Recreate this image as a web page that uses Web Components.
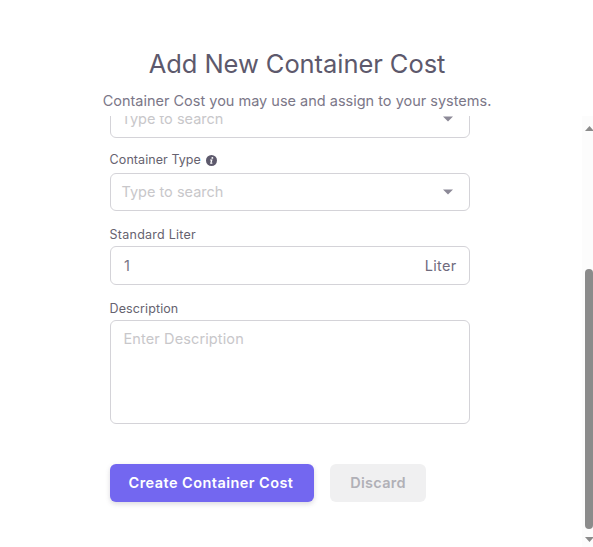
<!DOCTYPE html>
<html lang="en">
<head>
<meta charset="utf-8">
<title>Add New Container Cost</title>
<style>
  html, body { margin: 0; height: 100%; overflow: hidden; background: #fff; }
  body { font-family: Inter, "Liberation Sans", sans-serif; color: #6f6b7d; }
</style>
</head>
<body>
<cost-dialog></cost-dialog>
<script>
const define = (name, markup) => {
  const template = document.createElement('template');
  template.innerHTML = markup;
  customElements.define(name, class extends HTMLElement {
    constructor() {
      super();
      this.attachShadow({ mode: 'open' }).append(template.content.cloneNode(true));
    }
  });
};

define('dialog-heading', `
  <style>
    :host { display: block; height: 116px; box-sizing: border-box; padding: 46px 0 0 1px; text-align: center; white-space: nowrap; }
    h1 { margin: 0; font-size: 25.5px; line-height: 36px; font-weight: 400; color: #5d596c; letter-spacing: -.06px; }
    p { margin: 9px 0 0; font-size: 14.5px; line-height: 20px; letter-spacing: 0; color: #7b7788; }
  </style>
  <h1><slot name="title"></slot></h1>
  <p><slot></slot></p>`);

define('field-label', `
  <style>
    :host { display: flex; align-items: center; gap: 5px; height: 18px; font-size: 12.5px; line-height: 18px; color: #66626f; letter-spacing: var(--tracking, .07px); margin-left: -.4px; }
  </style>
  <slot></slot>`);

define('info-icon', `
  <style>:host { display: block; width: 11px; height: 11px; } svg { display: block; }</style>
  <svg width="11" height="11" viewBox="0 0 22 22">
    <circle cx="11" cy="11" r="11" fill="#5d596c"/>
    <circle cx="12.7" cy="5.8" r="1.9" fill="#fff"/>
    <path d="M8.3 9.2h4.8l-1.8 6.5h1.7l-.4 1.6H8.2l1.7-6.5H8z" fill="#fff"/>
  </svg>`);

define('select-box', `
  <style>
    :host { display: flex; align-items: center; justify-content: space-between; box-sizing: border-box; height: 38px;
      padding: 0 16px 0 10.5px; border: 1px solid #d4d3d8; border-radius: 6px; background: #fff;
      font-size: 14.5px; line-height: 20px; color: #c8c7ca; }
    svg { display: block; }
  </style>
  <span><slot></slot></span>
  <svg width="10" height="6" viewBox="0 0 10 6"><path d="M0 .5h10L5 5.5z" fill="#8c8997"/></svg>`);

define('unit-input', `
  <style>
    :host { display: flex; align-items: center; justify-content: space-between; box-sizing: border-box; height: 39px;
      padding: 0 13px; border: 1px solid #d4d3d8; border-radius: 6px; font-size: 14.5px; line-height: 20px; color: #777384; }
    .unit { letter-spacing: .3px; margin-right: -.5px; color: #6f6b7d; }
  </style>
  <span><slot></slot></span><span class="unit"><slot name="unit"></slot></span>`);

define('text-area', `
  <style>
    :host { display: block; box-sizing: border-box; height: 104px; padding: 8px 12.5px; border: 1px solid #d4d3d8;
      border-radius: 6px; font-size: 14.5px; line-height: 20px; color: #c8c7ca; letter-spacing: .12px; }
  </style>
  <slot></slot>`);

define('action-button', `
  <style>
    :host { display: flex; align-items: center; justify-content: center; box-sizing: border-box; width: 96px; height: 38px;
      padding-bottom: 1px; border-radius: 6px; background: #f0f0f1; color: #b1b0b7; font-size: 14.5px; font-weight: 600;
      letter-spacing: .3px; white-space: nowrap; }
    :host([primary]) { width: 204px; background: #7367f0; color: #fff; letter-spacing: .44px; padding-right: 2px;
      box-shadow: 0 2px 5px rgba(75, 70, 92, .2); }
  </style>
  <slot></slot>`);

define('scroll-rail', `
  <style>
    :host { display: flex; flex-direction: column; align-items: flex-end; width: 11px; box-sizing: border-box; background: #fcfcfc;
      padding-top: 9px; }
    svg { display: block; }
    .thumb { width: 8px; height: 260px; margin: 138px 0 8px; border-radius: 4px; background: #8b8b8b; }
  </style>
  <svg width="8" height="6" viewBox="0 0 8 6"><path d="M0 6 4.5 1 9 6z" fill="#8b8b8b"/></svg>
  <div class="thumb"></div>
  <svg width="8" height="6" viewBox="0 0 8 6"><path d="M0 0h9L4.5 5z" fill="#8b8b8b"/></svg>`);

define('cost-dialog', `
  <style>
    :host { display: flex; flex-direction: column; width: 593px; height: 547px; background: #fff; }
    .body { flex: 1; min-height: 0; display: flex; justify-content: space-between; overflow: hidden; }
    .form { width: 360px; margin-left: 110px; margin-top: -16px; }
    .type { margin: 13px 0 4px -.4px; }
    .liter { margin: 15px 0 2px -.4px; --tracking: .24px; }
    .desc { margin: 15px 0 2px -.4px; --tracking: .1px; }
    .actions { display: flex; gap: 16px; margin-top: 40px; }
  </style>
  <dialog-heading><span slot="title">Add New Container Cost</span>Container Cost you may use and assign to your systems.</dialog-heading>
  <div class="body">
    <div class="form">
      <select-box>Type to search</select-box>
      <field-label class="type"><span>Container Type</span><info-icon></info-icon></field-label>
      <select-box>Type to search</select-box>
      <field-label class="liter">Standard Liter</field-label>
      <unit-input>1<span slot="unit">Liter</span></unit-input>
      <field-label class="desc">Description</field-label>
      <text-area>Enter Description</text-area>
      <div class="actions">
        <action-button primary>Create Container Cost</action-button>
        <action-button>Discard</action-button>
      </div>
    </div>
    <scroll-rail></scroll-rail>
  </div>`);
</script>
</body>
</html>
